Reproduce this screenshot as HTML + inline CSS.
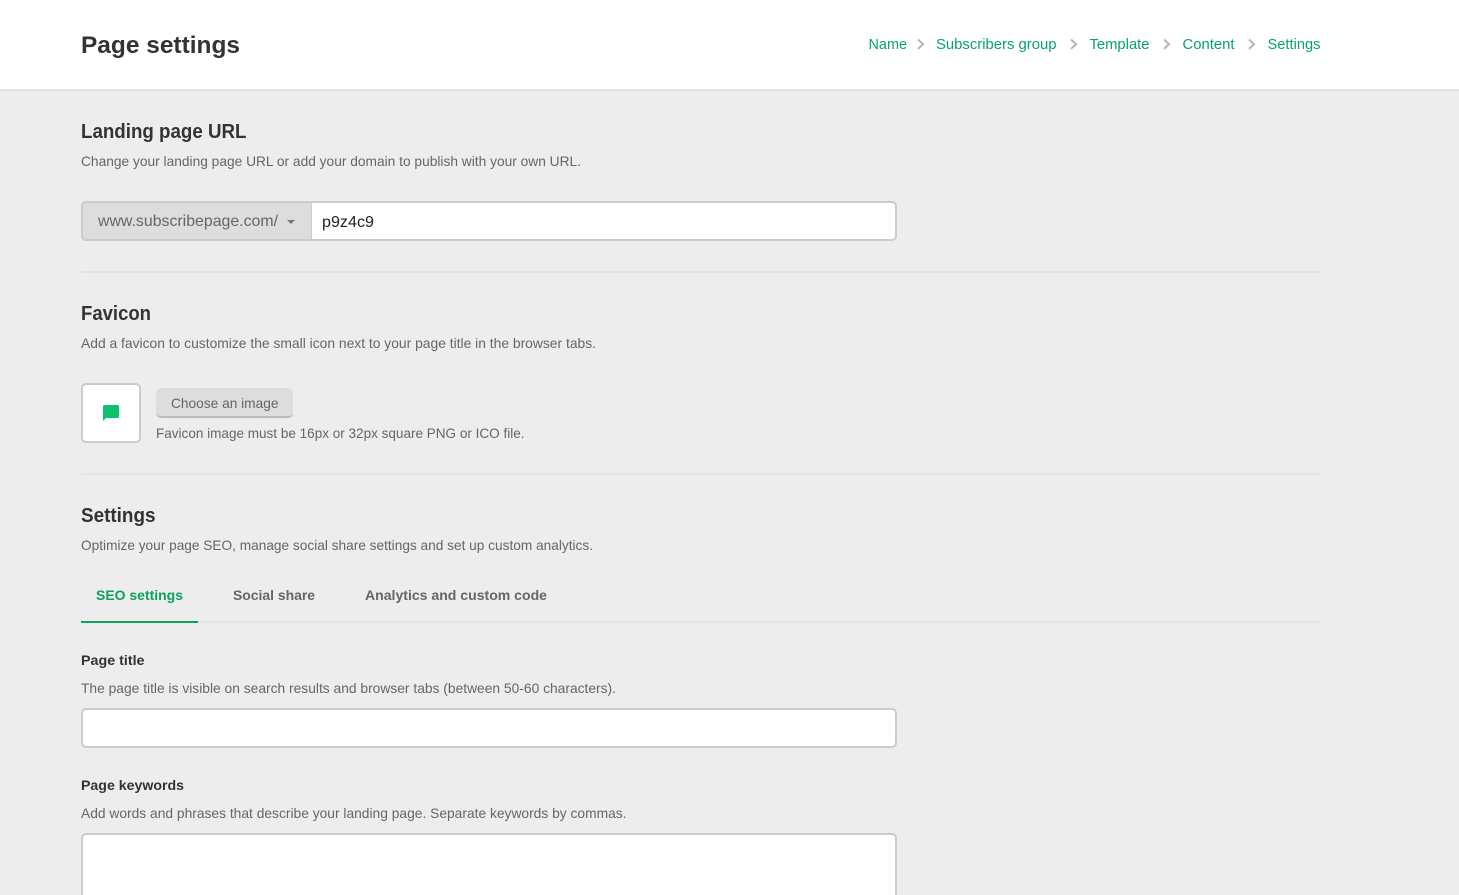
<!DOCTYPE html>
<html lang="en"><head><meta charset="utf-8"><title>Page settings</title>
<style>
html,body{margin:0;padding:0;width:1459px;height:895px;overflow:hidden;background:#ededed}
div{position:absolute;box-sizing:border-box}
svg{position:absolute;left:0;top:0}
text{font-family:"Liberation Sans",sans-serif;font-size:14px;fill:#666}
.b{font-weight:bold;fill:#333}
.g{fill:#09a26f}
</style></head><body>
<div style="left:0;top:0;width:1459px;height:91px;background:#fff;border-bottom:2px solid #e3e3e3"></div>
<div style="left:81px;top:201px;width:816px;height:40px;background:#fff;border:2px solid #ccc;border-radius:5px"></div>
<div style="left:81px;top:201px;width:231px;height:40px;background:#ddd;border:2px solid #ccc;border-right-width:1px;border-radius:5px 0 0 5px"></div>
<div style="left:81px;top:271px;width:1240px;height:2px;background:#e3e3e3"></div>
<div style="left:81px;top:383px;width:60px;height:60px;background:#fff;border:2px solid #ccc;border-radius:5px"></div>
<div style="left:156px;top:388px;width:137px;height:30px;background:#ddd;border-bottom:2px solid #bbb;border-radius:5px"></div>
<div style="left:81px;top:473px;width:1240px;height:2px;background:#e3e3e3"></div>
<div style="left:81px;top:621px;width:1240px;height:2px;background:#e3e3e3"></div>
<div style="left:81px;top:621px;width:117px;height:2px;background:#09a25f"></div>
<div style="left:81px;top:708px;width:816px;height:40px;background:#fff;border:2px solid #ccc;border-radius:5px"></div>
<div style="left:81px;top:833px;width:816px;height:62px;background:#fff;border:2px solid #ccc;border-bottom:0;border-radius:5px 5px 0 0"></div>
<svg width="1459" height="895" viewBox="0 0 1459 895">
<text class="b" x="81" y="53" style="font-size:24.500px" textLength="159" lengthAdjust="spacingAndGlyphs">Page settings</text>
<text class="g" x="868.500" y="49" style="font-size:14.500px" textLength="38.500" lengthAdjust="spacingAndGlyphs">Name</text>
<text class="g" x="936" y="49" style="font-size:14.500px" textLength="120.500" lengthAdjust="spacingAndGlyphs">Subscribers group</text>
<text class="g" x="1089.500" y="49" style="font-size:14.500px" textLength="60" lengthAdjust="spacingAndGlyphs">Template</text>
<text class="g" x="1182.500" y="49" style="font-size:14.500px" textLength="52" lengthAdjust="spacingAndGlyphs">Content</text>
<text class="g" x="1267.500" y="49" style="font-size:14.500px" textLength="53" lengthAdjust="spacingAndGlyphs">Settings</text>
<g fill="none" stroke="#b5b5b5" stroke-width="2">
<path d="M918 39.500l5 4.700-5 4.700"/><path d="M1071 39.500l5 4.700-5 4.700"/><path d="M1164 39.500l5 4.700-5 4.700"/><path d="M1249 39.500l5 4.700-5 4.700"/>
</g>
<text class="b" x="81" y="138" style="font-size:20px" textLength="165.500" lengthAdjust="spacingAndGlyphs">Landing page URL</text>
<text x="81" y="166" textLength="500" lengthAdjust="spacingAndGlyphs">Change your landing page URL or add your domain to publish with your own URL.</text>
<text x="98" y="226" style="font-size:16px" textLength="180" lengthAdjust="spacingAndGlyphs">www.subscribepage.com/</text>
<path d="M287 220h8l-4 4z" fill="#777"/>
<text x="322" y="227" style="font-size:16px;fill:#222" textLength="52" lengthAdjust="spacingAndGlyphs">p9z4c9</text>
<text class="b" x="81" y="320" style="font-size:20px" textLength="70" lengthAdjust="spacingAndGlyphs">Favicon</text>
<text x="81" y="348" textLength="515" lengthAdjust="spacingAndGlyphs">Add a favicon to customize the small icon next to your page title in the browser tabs.</text>
<path d="M104.500 405h13a1.500 1.500 0 0 1 1.500 1.500v10a1.500 1.500 0 0 1-1.500 1.500h-11.500l-3 3v-14.500a1.500 1.500 0 0 1 1.500-1.500z" fill="#0cc16d"/>
<text x="171" y="408" textLength="107.500" lengthAdjust="spacingAndGlyphs">Choose an image</text>
<text x="156" y="438" textLength="368.500" lengthAdjust="spacingAndGlyphs">Favicon image must be 16px or 32px square PNG or ICO file.</text>
<text class="b" x="81" y="522" style="font-size:20px" textLength="74.500" lengthAdjust="spacingAndGlyphs">Settings</text>
<text x="81" y="550" textLength="512" lengthAdjust="spacingAndGlyphs">Optimize your page SEO, manage social share settings and set up custom analytics.</text>
<text class="b" x="96" y="600" style="fill:#09a25f" textLength="87" lengthAdjust="spacingAndGlyphs">SEO settings</text>
<text class="b" x="233" y="600" style="fill:#666" textLength="82" lengthAdjust="spacingAndGlyphs">Social share</text>
<text class="b" x="365" y="600" style="fill:#666" textLength="182" lengthAdjust="spacingAndGlyphs">Analytics and custom code</text>
<text class="b" x="81" y="665" textLength="63.500" lengthAdjust="spacingAndGlyphs">Page title</text>
<text x="81" y="693" textLength="535" lengthAdjust="spacingAndGlyphs">The page title is visible on search results and browser tabs (between 50-60 characters).</text>
<text class="b" x="81" y="790" textLength="103" lengthAdjust="spacingAndGlyphs">Page keywords</text>
<text x="81" y="818" textLength="545.500" lengthAdjust="spacingAndGlyphs">Add words and phrases that describe your landing page. Separate keywords by commas.</text>
</svg>
</body></html>
